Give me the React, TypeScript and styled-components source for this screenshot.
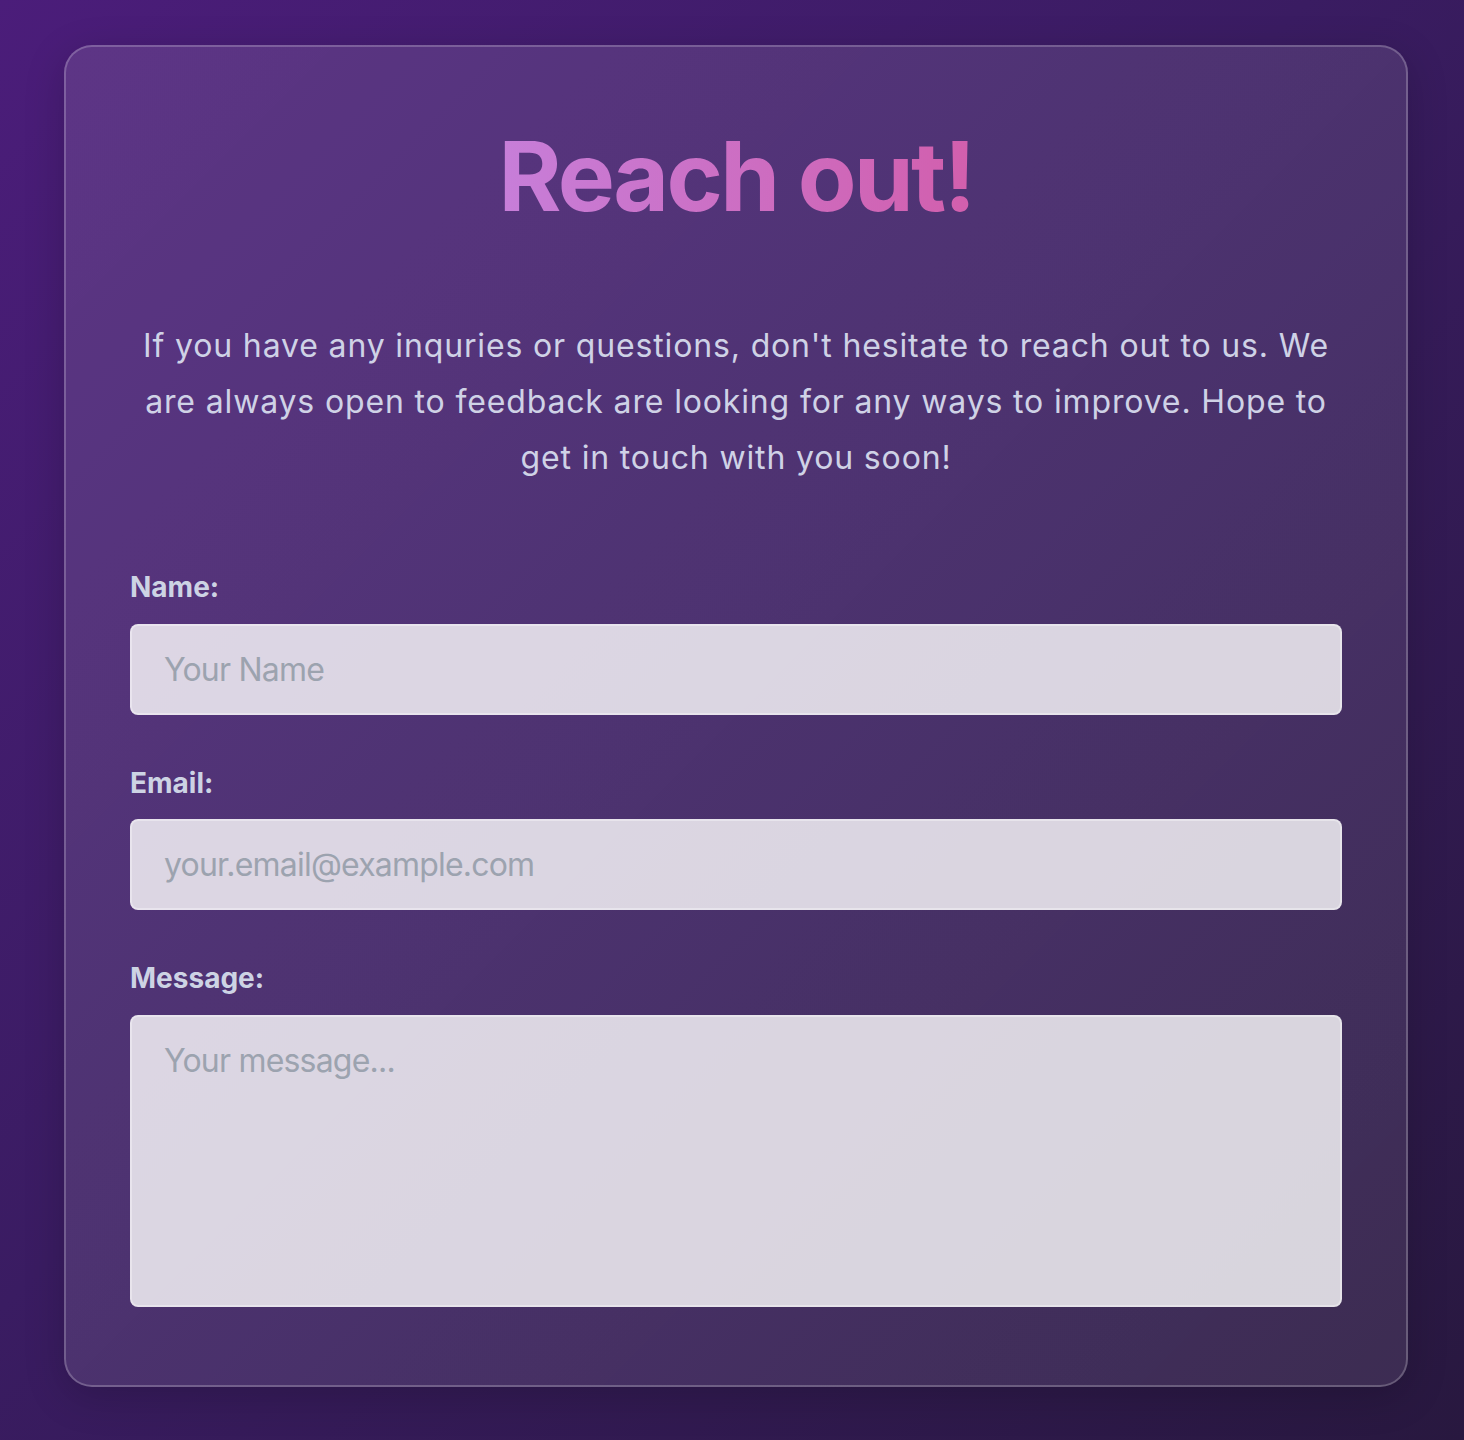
import React from "react";
import styled, { createGlobalStyle } from "styled-components";

const GlobalStyle = createGlobalStyle`
  html, body {
    margin: 0;
    padding: 0;
  }
  body {
    font-family: Inter, "Noto Sans", "Liberation Sans", sans-serif;
    background: linear-gradient(135deg, #4b1d7a 0%, #3a1c62 45%, #28183f 100%);
    min-height: 1440px;
  }
  * { box-sizing: border-box; }
`;

const Page = styled.main`
  min-height: 1440px;
  padding: 45px 56px 55px 64px;
  display: flex;
  flex-direction: column;
`;

const Card = styled.section`
  border: 2px solid rgba(255, 255, 255, 0.22);
  border-radius: 28px;
  background: linear-gradient(135deg, rgba(255, 255, 255, 0.11) 0%, rgba(255, 255, 255, 0.09) 100%);
  box-shadow: 0 10px 40px rgba(0, 0, 0, 0.18);
  padding: 64px 64px 78px;
  display: flex;
  flex-direction: column;
  align-items: stretch;
`;

const Heading = styled.h1`
  margin: 8px 0 84px;
  text-align: center;
  font-size: 96px;
  line-height: 1.2;
  font-weight: 700;
  letter-spacing: -2.6px;
`;

const GradientText = styled.span`
  display: inline-block;
  background: linear-gradient(90deg, #c77ed9 0%, #d25fad 100%);
  -webkit-background-clip: text;
  background-clip: text;
  color: transparent;
`;

const Intro = styled.p`
  margin: 0 0 85px;
  text-align: center;
  font-size: 32px;
  line-height: 56px;
  letter-spacing: 0.85px;
  color: #cfd2e6;
  font-weight: 400;
`;

const Form = styled.form`
  display: flex;
  flex-direction: column;
  gap: 52px;
`;

const Field = styled.div`
  display: flex;
  flex-direction: column;
  gap: 19px;
`;

const Label = styled.label`
  font-size: 28px;
  line-height: 1.2;
  font-weight: 700;
  color: #cdd3e4;
`;

const fieldStyles = `
  width: 100%;
  font-family: Inter, "Noto Sans", "Liberation Sans", sans-serif;
  font-size: 32px;
  line-height: normal;
  letter-spacing: -0.8px;
  color: #374151;
  background: rgba(255, 255, 255, 0.8);
  border: 2px solid rgba(255, 255, 255, 0.35);
  border-radius: 8px;
  padding: 24px 32px;
  outline: none;
  margin: 0;
  &::placeholder {
    color: #9ca3af;
    opacity: 1;
  }
`;

const Input = styled.input`
  ${fieldStyles}
  height: 91px;
`;

const TextArea = styled.textarea`
  ${fieldStyles}
  display: block;
  height: 292px;
  resize: none;
`;

export default function App() {
  return (
    <>
      <GlobalStyle />
      <Page>
        <Card>
          <Heading>
            <GradientText>Reach out!</GradientText>
          </Heading>
          <Intro>
            If you have any inquries or questions, don't hesitate to reach out to us. We are
            always open to feedback are looking for any ways to improve. Hope to get in touch
            with you soon!
          </Intro>
          <Form onSubmit={(e) => e.preventDefault()}>
            <Field>
              <Label htmlFor="name">Name:</Label>
              <Input id="name" type="text" placeholder="Your Name" />
            </Field>
            <Field>
              <Label htmlFor="email">Email:</Label>
              <Input id="email" type="email" placeholder="your.email@example.com" />
            </Field>
            <Field>
              <Label htmlFor="message">Message:</Label>
              <TextArea id="message" placeholder="Your message..." />
            </Field>
          </Form>
        </Card>
      </Page>
    </>
  );
}
